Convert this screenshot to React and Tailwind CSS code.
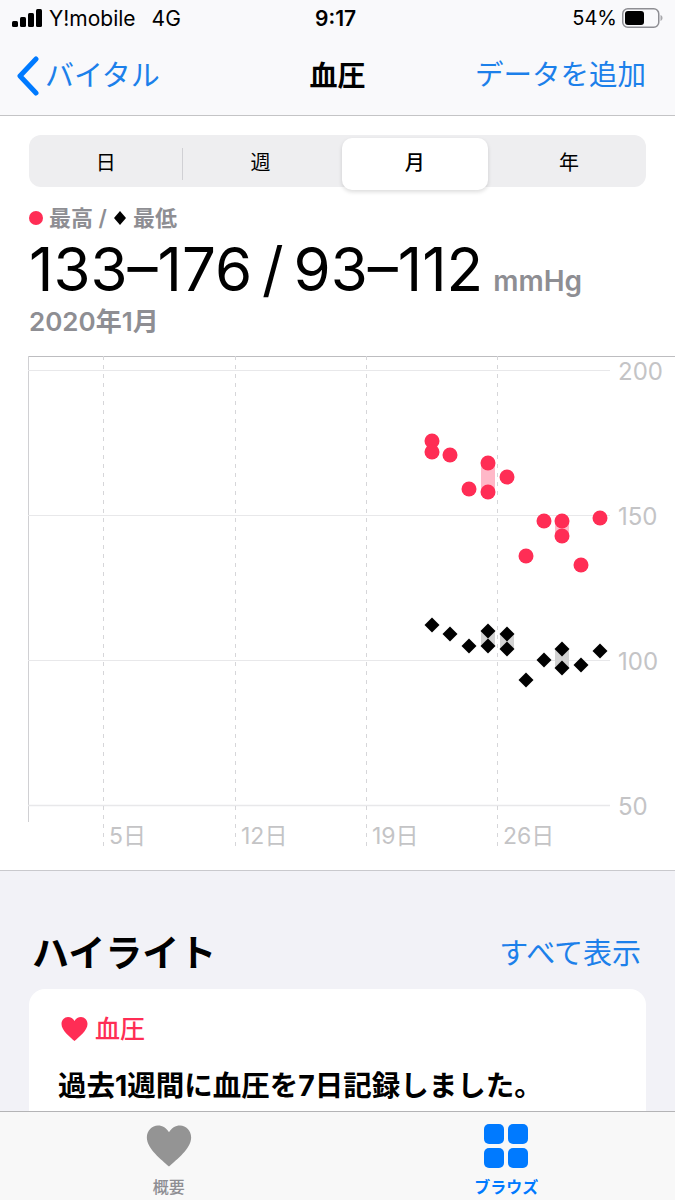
const red = [[432, 441], [432, 452], [450, 455], [488, 463], [488, 492], [469, 489], [507, 477], [544, 521], [562, 521], [562, 536], [600, 518], [526, 556], [581, 565]]
const black = [[432, 625], [450, 634], [469, 646], [488, 631], [488, 646], [507, 634], [507, 649], [526, 680], [544, 660], [562, 649], [562, 668], [581, 665], [600, 651]]
const chartTop = 356

function Chart() {
  const y = (v) => v - chartTop
  return (
    <svg width="675" height="494" viewBox="0 0 675 494" className="block">
      <line x1="28" y1="0.5" x2="675" y2="0.5" stroke="#bdbdc0" />
      <line x1="28.5" y1="0" x2="28.5" y2="466" stroke="#d0d0d3" />
      {[[370, 200], [515, 150], [660, 100], [805, 50]].map(([py, label]) => (
        <g key={label}>
          <line x1="28" y1={y(py) + 0.5} x2="610" y2={y(py) + 0.5} stroke="#e8e8ea" strokeWidth={label === 50 ? 1.5 : 1} />
          <text x="618" y={y(py) + 10} fontSize="24" fill="#c4c4c6" style={{ fontFamily: 'Inter' }}>{label}</text>
        </g>
      ))}
      {[[103, '5日'], [235, '12日'], [366, '19日'], [497, '26日']].map(([px, label]) => (
        <g key={label}>
          <line x1={px + 0.5} y1="0" x2={px + 0.5} y2="494" stroke="#d6d6d9" strokeDasharray="4 5" />
          <text x={px + 6} y="488" fontSize="23" fill="#c4c4c6" style={{ fontFamily: 'Inter, "Noto Sans CJK JP"' }}>{label}</text>
        </g>
      ))}
      <rect x="481" y={y(463)} width="14" height="29" fill="#ffb8c8" />
      <rect x="555" y={y(521)} width="14" height="15" fill="#ffb8c8" />
      <rect x="481" y={y(631)} width="14" height="15" fill="#d2d2d2" />
      <rect x="500" y={y(634)} width="14" height="15" fill="#d2d2d2" />
      <rect x="555" y={y(649)} width="14" height="19" fill="#d2d2d2" />
      {red.map(([px, py], i) => (
        <circle key={i} cx={px} cy={y(py)} r="7.5" fill="#ff2d55" />
      ))}
      {black.map(([px, py], i) => (
        <path key={i} d={`M${px} ${y(py) - 7.5}L${px + 7.5} ${y(py)}L${px} ${y(py) + 7.5}L${px - 7.5} ${y(py)}Z`} fill="#000" />
      ))}
    </svg>
  )
}

function App() {
  return (
    <div className="w-[675px] h-[1200px] overflow-hidden flex flex-col bg-[#f2f2f7] text-black font-['Inter','Noto_Sans_CJK_JP',sans-serif]">
      <header className="h-[116px] shrink-0 bg-[#f9f9fb] border-b border-[#c4c4c6]">
        <div className="relative h-[36px] flex items-center justify-between pl-3 pr-3">
          <div className="flex items-center text-[21px] leading-none">
            <svg width="30" height="18" viewBox="0 0 30 18" fill="#000">
              <rect x="0" y="12" width="6" height="6" rx="1.5" />
              <rect x="8" y="8" width="6" height="10" rx="1.5" />
              <rect x="16" y="4" width="6" height="14" rx="1.5" />
              <rect x="24" y="0" width="6" height="18" rx="1.5" />
            </svg>
            <span className="ml-[7px]">Y!mobile</span>
            <span className="ml-4">4G</span>
          </div>
          <span className="absolute left-[315px] text-[21px] leading-none font-semibold">9:17</span>
          <div className="flex items-center text-[20px] leading-none">
            <span>54%</span>
            <svg width="41" height="20" viewBox="0 0 41 20" className="ml-[5px]">
              <rect x="0.75" y="0.75" width="36" height="18.5" rx="5" fill="none" stroke="#8e8e93" strokeWidth="1.5" />
              <rect x="3" y="3" width="19" height="14" rx="3" fill="#000" />
              <path d="M38.5 7v6c1.2-.4 2-1.6 2-3s-.8-2.600-2-3z" fill="#a8a8ac" />
            </svg>
          </div>
        </div>
        <nav className="h-[79px] grid grid-cols-[1fr_auto_1fr] items-center px-[17px] text-[29px] leading-none">
          <div className="flex items-center text-[#1c80ea]">
            <svg width="22" height="40" viewBox="0 0 22 40" fill="none" stroke="#007aff" strokeWidth="5" strokeLinecap="round" strokeLinejoin="round">
              <path d="M19 3L3 20l16 17" />
            </svg>
            <span className="ml-[6px]">バイタル</span>
          </div>
          <div className="text-[28px] font-semibold">血圧</div>
          <div className="pr-[12px] text-right text-[28.5px] text-[#1c80ea]">データを追加</div>
        </nav>
      </header>

      <main className="flex-1 min-h-0 overflow-hidden">
        <section className="bg-white border-b border-[#c9c9cd] h-[755px]">
          <div className="px-[29px] pt-[19px]">
            <div className="h-[52px] bg-[#eeeef0] rounded-xl grid grid-cols-4 text-[20px] text-center">
              <div className="my-[13px] pb-[2px] border-r border-[#d0d0d4] flex items-center justify-center">日</div>
              <div className="pb-[2px] flex items-center justify-center">週</div>
              <div className="my-[3px] mx-1 pb-[2px] bg-white rounded-[10px] shadow-[0_2px_4px_rgba(0,0,0,0.14)] font-medium flex items-center justify-center">月</div>
              <div className="pb-[2px] flex items-center justify-center">年</div>
            </div>
            <div className="mt-[18px] h-[26px] flex items-center text-[22px] leading-none font-semibold text-[#8e8e93]">
              <span className="w-[14px] h-[14px] rounded-full bg-[#ff2d55]" />
              <span className="ml-[6px]">最高 /</span>
              <svg width="14" height="14" viewBox="0 0 14 14" className="ml-[6px]"><path d="M7 0l6 7-6 7-6-7z" fill="#000" /></svg>
              <span className="ml-[6px]">最低</span>
            </div>
            <div className="mt-[8px] h-[60px] flex items-baseline text-[60px] leading-[60px]">
              <span className="[word-spacing:-7px]">133–176 / 93–112</span>
              <span className="ml-[10px] text-[28px] font-semibold text-[#8e8e93]">mmHg</span>
            </div>
            <div className="mt-[7px] h-[32px] text-[26px] leading-[32px] font-semibold text-[#8e8e93]">2020年1月</div>
          </div>
          <div className="mt-[18px]">
            <Chart />
          </div>
        </section>

        <section className="px-[29px] pt-[60px]">
          <div className="flex items-center justify-between pl-[3px] pr-[5px] h-[44px]">
            <h2 className="text-[37px] leading-none font-bold">ハイライト</h2>
            <span className="text-[29px] leading-none text-[#1c80ea]">すべて表示</span>
          </div>
          <div className="mt-[14px] bg-white rounded-2xl h-[200px] px-[32px] pt-[24px]">
            <div className="flex items-center text-[25px] leading-[32px] font-medium text-[#ff2d55]">
              <svg width="27" height="24" viewBox="0 0 27 24" fill="#ff2d55">
                <path d="M13.500 24C9 20 .5 13.500.5 7 .5 3 3.500 0 7 0c2.800 0 5 1.500 6.500 4C15 1.500 17.200 0 20 0c3.500 0 6.500 3 6.500 7 0 6.500-8.500 13-13 17z" />
              </svg>
              <span className="ml-[7px]">血圧</span>
            </div>
            <p className="mt-[23px] -ml-[3px] text-[28.5px] leading-[36px] font-bold whitespace-nowrap">過去1週間に血圧を7日記録しました。</p>
          </div>
        </section>
      </main>

      <footer className="h-[89px] shrink-0 bg-[#f8f8f8] border-t border-[#b4b4b6] grid grid-cols-2">
        <div className="flex flex-col items-center pt-[13px] text-[#8e8e93]">
          <svg width="46" height="42" viewBox="0 0 27 24" fill="#949494">
            <path d="M13.500 24C9 20 .5 13.500.5 7 .5 3 3.500 0 7 0c2.800 0 5 1.500 6.500 4C15 1.500 17.200 0 20 0c3.500 0 6.500 3 6.500 7 0 6.500-8.500 13-13 17z" />
          </svg>
          <span className="mt-[9px] text-[16px] leading-[22px] font-medium">概要</span>
        </div>
        <div className="flex flex-col items-center pt-[12px] text-[#007aff]">
          <div className="grid grid-cols-2 gap-[4px]">
            <span className="w-[20px] h-[20px] rounded-[5px] bg-[#007aff]" />
            <span className="w-[20px] h-[20px] rounded-[5px] bg-[#007aff]" />
            <span className="w-[20px] h-[20px] rounded-[5px] bg-[#007aff]" />
            <span className="w-[20px] h-[20px] rounded-[5px] bg-[#007aff]" />
          </div>
          <span className="mt-[8px] text-[16px] leading-[22px] font-bold">ブラウズ</span>
        </div>
      </footer>
    </div>
  )
}

export default App
